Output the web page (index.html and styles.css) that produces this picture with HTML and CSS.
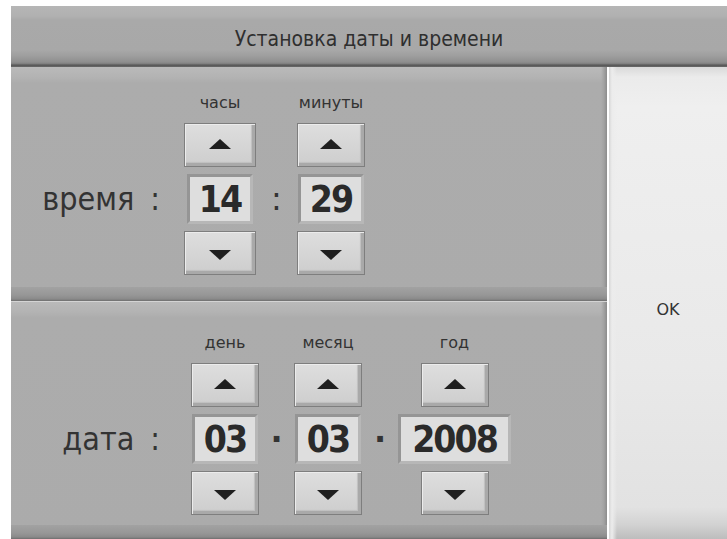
FILE: index.html
```html
<!DOCTYPE html>
<html lang="ru">
<head>
<meta charset="utf-8">
<title>Установка даты и времени</title>
<link rel="stylesheet" href="styles.css">
</head>
<body>
<div class="screen">
  <header class="title">Установка даты и времени</header>
  <div class="main">
    <div class="panels">
      <section class="panel panel--time">
        <div class="caption">время<span class="caption-colon">:</span></div>
        <div class="spin spin--hours">
          <div class="spin-label">часы</div>
          <button class="arrow arrow--up" type="button"><span class="tri"></span></button>
          <div class="value">14</div>
          <button class="arrow arrow--down" type="button"><span class="tri"></span></button>
        </div>
        <div class="sep sep--colon">:</div>
        <div class="spin">
          <div class="spin-label">минуты</div>
          <button class="arrow arrow--up" type="button"><span class="tri"></span></button>
          <div class="value">29</div>
          <button class="arrow arrow--down" type="button"><span class="tri"></span></button>
        </div>
      </section>
      <section class="panel panel--date">
        <div class="caption">дата<span class="caption-colon">:</span></div>
        <div class="spin">
          <div class="spin-label">день</div>
          <button class="arrow arrow--up" type="button"><span class="tri"></span></button>
          <div class="value">03</div>
          <button class="arrow arrow--down" type="button"><span class="tri"></span></button>
        </div>
        <div class="sep sep--dot">·</div>
        <div class="spin">
          <div class="spin-label">месяц</div>
          <button class="arrow arrow--up" type="button"><span class="tri"></span></button>
          <div class="value">03</div>
          <button class="arrow arrow--down" type="button"><span class="tri"></span></button>
        </div>
        <div class="sep sep--dot sep--narrow">·</div>
        <div class="spin spin--year">
          <div class="spin-label">год</div>
          <button class="arrow arrow--up" type="button"><span class="tri"></span></button>
          <div class="value value--year">2008</div>
          <button class="arrow arrow--down" type="button"><span class="tri"></span></button>
        </div>
      </section>
    </div>
    <button class="ok" type="button">OK</button>
  </div>
</div>
</body>
</html>
```
FILE: styles.css
```css
* {
  box-sizing: border-box;
}

html, body {
  margin: 0;
  padding: 0;
  background: #ffffff;
}

.screen {
  width: 727px;
  height: 539px;
  padding: 6px 0 0 11px;
  display: flex;
  flex-direction: column;
  overflow: hidden;
  font-family: "DejaVu Sans", sans-serif;
  color: #2e2e2e;
}

/* header bar */
.title {
  height: 61px;
  flex: none;
  display: flex;
  align-items: center;
  justify-content: center;
  padding-top: 5px;
  font-family: "DejaVu Sans Condensed", "DejaVu Sans", sans-serif;
  font-size: 21px;
  color: #2f2f2f;
  background: linear-gradient(to bottom,
    #b6b6b6 0px, #b1b1b1 10px, #a9a9a9 14px, #a8a8a8 44px,
    #9e9e9e 50px, #8f8f8f 56px, #7c7c7c 58px, #555555 59px, #6a6a6a 61px);
}

.main {
  flex: 1;
  display: flex;
  min-height: 0;
}

.panels {
  width: 596px;
  flex: none;
  display: flex;
  flex-direction: column;
}

/* grey panels holding the spinners */
.panel {
  display: flex;
  align-items: flex-start;
  background:
    linear-gradient(to left, #8c8c8c 0px, #a2a2a2 3px, rgba(171,171,171,0) 6px),
    linear-gradient(to bottom,
      #bababa 0px, #b3b3b3 10px, #acacac 16px, #ababab 100%);
  position: relative;
}

.panel::after {
  content: "";
  position: absolute;
  left: 0;
  right: 0;
  bottom: 0;
  height: 14px;
  background: linear-gradient(to bottom, #a2a2a2 0px, #979797 8px, #8a8a8a 12px, #6e6e6e 14px);
}

.panel--time {
  height: 234px;
  padding-top: 28px;
}

.panel--date {
  flex: 1;
  padding-top: 33px;
  border-top: 1px solid #d4d4d4;
}

.caption {
  width: 173px;
  flex: none;
  padding-top: 79px;
  padding-right: 24px;
  height: 129px;
  line-height: 50px;
  text-align: right;
  font-family: "DejaVu Sans Condensed", "DejaVu Sans", sans-serif;
  font-size: 32px;
  color: #333333;
}

.panel--date .caption {
  width: 180px;
  padding-right: 31px;
}

.caption-colon {
  margin-left: 16px;
}

.spin {
  width: 68px;
  flex: none;
  display: grid;
  grid-template-rows: 21px 44px 50px 44px;
  row-gap: 7px;
  justify-items: center;
}

.spin--hours {
  width: 72px;
}

.spin--year {
  width: 113px;
}

.spin-label {
  font-size: 16px;
  line-height: 16px;
  color: #333333;
  align-self: start;
}

/* raised arrow buttons */
.arrow {
  width: 100%;
  height: 44px;
  margin: 0;
  padding: 0;
  display: flex;
  align-items: center;
  justify-content: center;
  border: 1px solid #7e7e7e;
  background: linear-gradient(to bottom, #dedede 0%, #d4d4d4 60%, #cdcdcd 100%);
  box-shadow:
    inset 1px 1px 0 #ececec,
    inset -3px -3px 0 #a9a9a9,
    inset -4px -4px 1px #bfbfbf;
  cursor: pointer;
}

.spin--year .arrow {
  width: 68px;
}

.tri {
  width: 0;
  height: 0;
  border-left: 11px solid transparent;
  border-right: 11px solid transparent;
}

.arrow--up .tri {
  border-bottom: 10px solid #1f1f1f;
  margin-top: -2px;
}

.arrow--down .tri {
  border-top: 10px solid #1f1f1f;
  margin-top: 4px;
}

/* sunken value fields */
.value {
  width: 66px;
  height: 50px;
  display: flex;
  align-items: center;
  justify-content: center;
  border: 3px solid;
  border-color: #959595 #b7b7b7 #b7b7b7 #959595;
  background: #dedede;
  font-family: "DejaVu Sans Condensed", "DejaVu Sans", sans-serif;
  font-weight: bold;
  font-size: 37px;
  color: #2a2a2a;
  letter-spacing: -2px;
}

.value--year {
  width: 113px;
}

.sep {
  flex: none;
  width: 41px;
  padding-top: 79px;
  line-height: 50px;
  text-align: center;
  font-size: 32px;
  color: #333333;
}

.panel--date .sep {
  width: 35px;
  font-weight: bold;
}

.panel--date .sep--narrow {
  width: 36px;
}

/* OK button on the right */
.ok {
  flex: 1;
  margin: 0;
  padding: 12px 0 0;
  border: 0;
  border-left: 2px solid #ffffff;
  font-family: "DejaVu Sans", sans-serif;
  font-size: 16px;
  color: #333333;
  background:
    linear-gradient(to right, #d6d6d6 0px, #ececec 3px, rgba(236,236,236,0) 8px),
    linear-gradient(to bottom,
      #d9d9d9 0px, #ebebeb 10px, #efefef 40px, #e9e9e9 300px,
      #e2e2e2 440px, #d2d2d2 458px, #bdbdbd 472px);
  cursor: pointer;
}
```
